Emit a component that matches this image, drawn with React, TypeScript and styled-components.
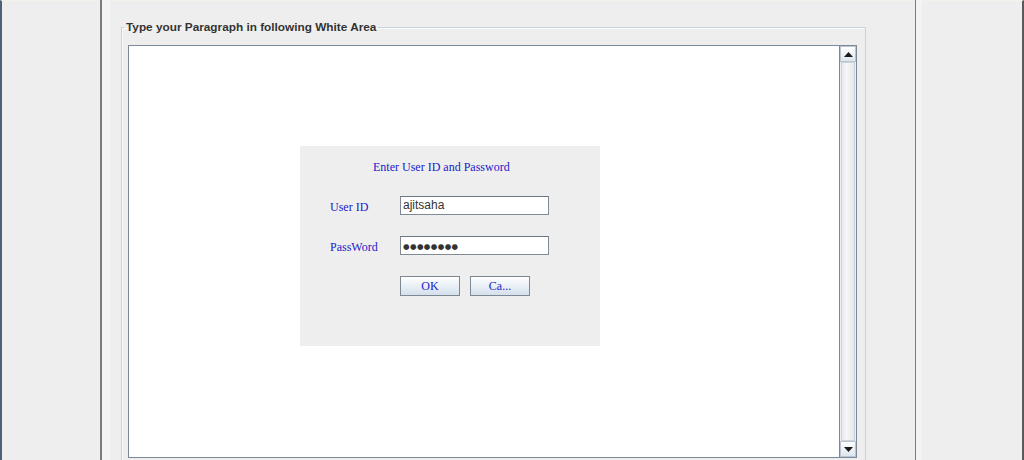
import React from "react";
import styled, { createGlobalStyle } from "styled-components";

const Global = createGlobalStyle`
  html, body { margin: 0; padding: 0; background: #eeeeee; overflow: hidden; }
  * { box-sizing: border-box; }
`;

const Screen = styled.div`
  display: flex;
  width: 1024px;
  height: 460px;
  overflow: hidden;
  background: #eeeeee;
`;

const SidePanel = styled.div<{ $side: "left" | "right" }>`
  width: ${(p) => (p.$side === "left" ? 100 : 102)}px;
  flex: none;
  background: #eeeeee;
  border-top: 1px solid #f4f1ea;
  ${(p) =>
    p.$side === "left"
      ? "border-left: 2px solid #4d6176;"
      : "border-right: 2px solid #5a5a5a;"}
`;

const Splitter = styled.div<{ $w: number; $line: number }>`
  width: ${(p) => p.$w}px;
  flex: none;
  background: #f3f3f3;
  border-left: ${(p) => p.$line}px solid #7c7c7c;
`;

const Main = styled.div`
  width: 805px;
  flex: none;
  background: #eeeeee;
  border-top: 1px solid #f4f1ea;
  padding: 19px 0 0 11px;
`;

const Group = styled.fieldset`
  margin: 0;
  width: 745px;
  min-width: 0;
  padding: 11px 8px 30px 6px;
  border: 1px solid #c8d3de;
  box-shadow: inset 1px 1px 0 #f8fafc;
`;

const Title = styled.legend`
  margin-left: -4px;
  padding: 0 2px;
  font: bold 11.8px/14px "Liberation Sans", Arial, sans-serif;
  color: #333333;
`;

const ScrollPane = styled.div`
  display: flex;
  width: 729px;
  height: 413px;
  border: 1px solid #7a8a99;
`;

const WhiteArea = styled.div`
  flex: 1;
  background: #ffffff;
  padding: 100px 0 0 171px;
`;

const ScrollBar = styled.div`
  width: 17px;
  flex: none;
  display: flex;
  flex-direction: column;
  background: #eeeeee;
  border-left: 1px solid #7a8a99;
`;

const ArrowButton = styled.div`
  height: 16px;
  flex: none;
  display: flex;
  align-items: center;
  justify-content: center;
  background: linear-gradient(#ffffff, #dde6ee);
  border: 1px solid #b8c4cf;
`;

const Thumb = styled.div`
  flex: 1;
  margin: 0 1px;
  background: linear-gradient(90deg, #e8ebee, #f5f6f8 40%, #e6e9ec);
  border: 1px solid #cbd2d9;
`;

const Dialog = styled.div`
  width: 300px;
  height: 200px;
  background: #eeeeee;
  padding: 14px 0 0 30px;
  font: 12px/14px "Liberation Serif", "Times New Roman", serif;
  color: #1a1ac8;
`;

const DialogTitle = styled.div`
  padding-left: 43px;
  margin-bottom: 22px;
`;

const Form = styled.div`
  display: grid;
  grid-template-columns: 70px 149px;
  grid-auto-rows: 19px;
  row-gap: 21px;
  align-items: center;
`;

const Label = styled.div`
  padding-top: 2px;
`;

const Field = styled.div`
  height: 19px;
  background: #ffffff;
  border: 1px solid #7f8a95;
  border-top-color: #6e7882;
  padding: 0 2px;
  display: flex;
  align-items: center;
  font: 12px/15px "Liberation Sans", Arial, sans-serif;
  color: #333333;
`;

const Dots = styled.span`
  font: 7.5px/15px "DejaVu Sans", sans-serif;
  letter-spacing: 0.4px;
  color: #333333;
  padding-top: 1px;
`;

const Buttons = styled.div`
  grid-column: 2;
  display: flex;
  gap: 10px;
  height: 20px;
  align-self: start;
`;

const Button = styled.div`
  width: 60px;
  height: 20px;
  border: 1px solid #7d8892;
  background: linear-gradient(#ffffff, #d4e0ec);
  display: flex;
  align-items: center;
  justify-content: center;
  font: 12px/14px "Liberation Serif", "Times New Roman", serif;
  color: #1a1ac8;
`;

const Arrow = ({ up }: { up?: boolean }) => (
  <svg width="9" height="5" viewBox="0 0 9 5">
    <polygon points={up ? "0,5 9,5 4.5,0" : "0,0 9,0 4.5,5"} fill="#1a1a1a" />
  </svg>
);

export default function App() {
  return (
    <>
      <Global />
      <Screen>
        <SidePanel $side="left" />
        <Splitter $w={10} $line={2} />
        <Main>
          <Group>
            <Title>Type your Paragraph in following White Area</Title>
            <ScrollPane>
              <WhiteArea>
                <Dialog>
                  <DialogTitle>Enter User ID and Password</DialogTitle>
                  <Form>
                    <Label>User ID</Label>
                    <Field>ajitsaha</Field>
                    <Label>PassWord</Label>
                    <Field>
                      <Dots>●●●●●●●●</Dots>
                    </Field>
                    <Buttons>
                      <Button>OK</Button>
                      <Button>Ca...</Button>
                    </Buttons>
                  </Form>
                </Dialog>
              </WhiteArea>
              <ScrollBar>
                <ArrowButton>
                  <Arrow up />
                </ArrowButton>
                <Thumb />
                <ArrowButton>
                  <Arrow />
                </ArrowButton>
              </ScrollBar>
            </ScrollPane>
          </Group>
        </Main>
        <Splitter $w={7} $line={1} />
        <SidePanel $side="right" />
      </Screen>
    </>
  );
}
